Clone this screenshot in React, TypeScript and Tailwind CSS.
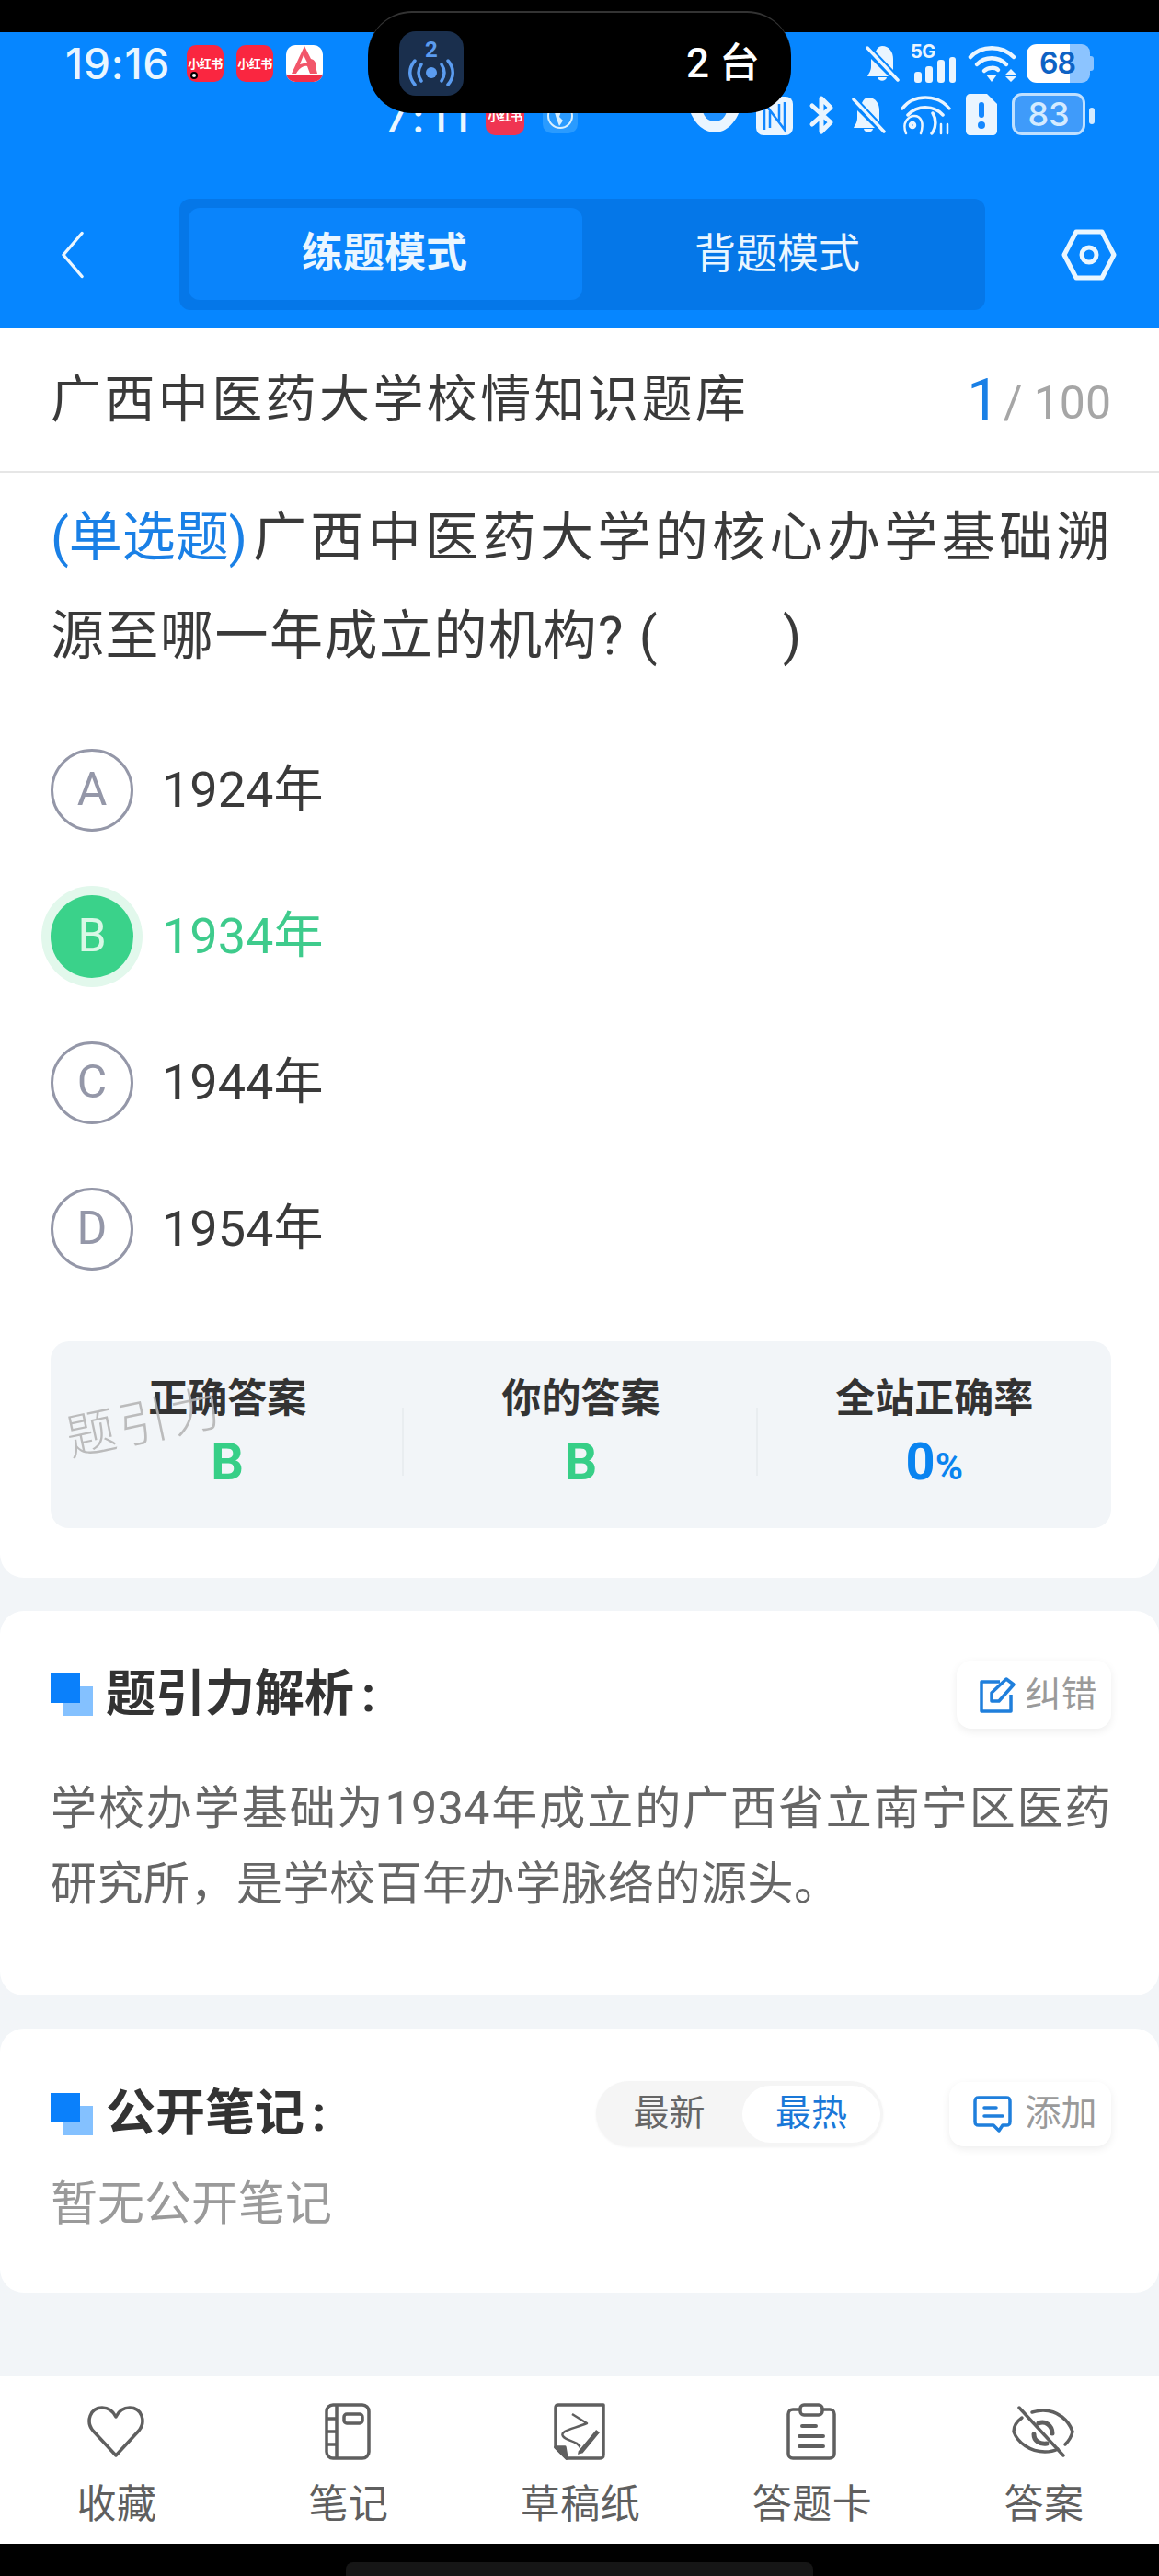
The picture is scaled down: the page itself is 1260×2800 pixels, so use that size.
import React from 'react';

const FONT = "font-['Roboto','Noto_Sans_CJK_SC',sans-serif]";

const RedApp: React.FC<{ dot?: boolean }> = ({ dot }) => (
  <div className="relative w-[40px] h-[40px] rounded-[10px] bg-[#fa2640] flex items-center justify-center">
    <span className="text-[13px] font-bold text-white leading-none tracking-[-0.5px] whitespace-nowrap">小红书</span>
    {dot && <span className="absolute left-[4px] bottom-[3px] w-[8px] h-[8px] rounded-full bg-white border-2 border-black" />}
  </div>
);

const AApp = () => (
  <div className="w-[40px] h-[40px] rounded-[10px] bg-white overflow-hidden flex flex-col">
    <svg viewBox="0 0 40 32" className="w-[40px] h-[32px]">
      <path d="M20 1 L27 15 C31 16 33 19 32 23 L34 31 L26 31 L23 23 C18 22 14 26 11 31 L6 31 Z" fill="#f2566a" />
      <path d="M19 11 L23 19 L15 21 Z" fill="#fff" />
    </svg>
    <div className="flex-1 bg-[#f0304a]" />
  </div>
);

const BellOff: React.FC<{ className?: string; color?: string }> = ({ className, color = '#eaf5ff' }) => (
  <svg viewBox="0 0 38 42" className={className}>
    <path d="M19 2 C27 2 31 9 31 16 L31 28 L12 8 C13.500 4 16 2 19 2 Z M7 16 L26 35 L3 35 C5 31 7 29 7 24 Z" fill={color} />
    <path d="M14 36 C15 41 23 41 24 36 Z" fill={color} />
    <path d="M3 4 L36 39" stroke={color} strokeWidth="3.500" strokeLinecap="round" />
  </svg>
);

const Wifi: React.FC = () => (
  <svg viewBox="0 0 54 42" className="w-[54px] h-[42px]" fill="none" stroke="#eaf5ff" strokeWidth="4.500" strokeLinecap="round">
    <path d="M3 14 C15 1 37 1 50 14" />
    <path d="M10 22 C19 13 33 13 42 22" />
    <path d="M18 29 C22 25 30 25 33 28" />
    <path d="M20 33 L32 33 L26 41 Z" fill="#eaf5ff" stroke="none" />
    <path d="M44 29 L50 35 L38 35 Z M38 37 L50 37 L44 43 Z" fill="#eaf5ff" stroke="none" transform="translate(3 -2)" />
  </svg>
);

const StatusTop = () => (
  <div className="h-[42px] flex items-center justify-between">
    <div className="flex items-center">
      <span className="w-[132px] text-[46px] leading-none text-[#eaf6ff] font-medium font-['Inter',sans-serif] tracking-[0.8px]">19:16</span>
      <div className="flex gap-[14px]">
        <RedApp dot />
        <RedApp />
        <AApp />
      </div>
    </div>
    <div className="flex items-center">
      <BellOff className="w-[38px] h-[42px]" />
      <div className="relative w-[50px] h-[42px] ml-[13px]">
        <span className="absolute left-[-1px] top-[-3px] text-[20px] font-bold leading-[22px] text-[#eaf5ff] font-['Inter',sans-serif] tracking-[-0.5px]">5G</span>
        <svg viewBox="0 0 50 42" className="w-[50px] h-[42px]" fill="#eaf5ff">
          <rect x="3" y="30" width="8" height="12" rx="3" />
          <rect x="15" y="24" width="8" height="18" rx="3" />
          <rect x="28" y="17" width="8" height="25" rx="3" />
          <rect x="41" y="14" width="7" height="28" rx="3" />
        </svg>
      </div>
      <div className="ml-[11px]"><Wifi /></div>
      <div className="ml-[10px] w-[74px] h-[42px] relative flex">
        <div className="w-[47px] h-[42px] bg-white rounded-l-[11px]" />
        <div className="w-[22px] h-[42px] bg-[#8cc4ff] rounded-r-[9px]" />
        <div className="w-[4px] h-[16px] mt-[13px] bg-[#8cc4ff] rounded-r-[3px]" />
        <span className="absolute left-[14px] top-[1px] text-[32px] font-semibold leading-[40px] text-[#0d62c4] font-['Inter',sans-serif] tracking-[-1px]">68</span>
      </div>
    </div>
  </div>
);

const StatusGhost = () => (
  <div className="h-[48px] flex items-end">
    <span className="ml-[347px] w-[110px] text-[46px] leading-[40px] text-[#eaf6ff] font-medium font-['Inter',sans-serif] tracking-[5px] whitespace-nowrap">7:11</span>
    <div className="ml-[0px] w-[42px] h-[42px] rounded-[10px] bg-[#f03552] flex items-center justify-center">
      <span className="text-[13px] font-bold text-white leading-none tracking-[-0.5px] whitespace-nowrap">小红书</span>
    </div>
    <svg viewBox="0 0 38 38" className="ml-[20px] w-[38px] h-[38px] mb-[2px]" fill="none" stroke="#d9f0ff" strokeWidth="2">
      <rect x="0" y="0" width="38" height="38" rx="10" fill="#2a9bff" stroke="none" />
      <circle cx="19" cy="19" r="13" />
      <path d="M12 12 L20 14 L18 20 L22 24 L18 30 L15 22 Z" fill="#d9f0ff" stroke="none" />
    </svg>
    <svg viewBox="0 0 60 40" className="ml-[119px] w-[60px] h-[40px] mb-[2px]">
      <path d="M0 6 C10 50 50 50 60 6 Z" fill="#eaf5ff" />
      <circle cx="30" cy="14" r="13" fill="#1e90ff" />
    </svg>
    <svg viewBox="0 0 40 42" className="ml-[15px] w-[40px] h-[42px]" fill="none" stroke="#1287ff" strokeWidth="2.500">
      <rect x="0" y="0" width="40" height="42" rx="8" fill="#eaf5ff" stroke="none" />
      <path d="M9 36 L9 7 L31 36 L31 6 M15 34 L15 16 M25 8 L25 26" />
    </svg>
    <svg viewBox="0 0 28 44" className="ml-[17px] w-[28px] h-[44px]" fill="none" stroke="#eaf5ff" strokeWidth="5" strokeLinejoin="round" strokeLinecap="round">
      <path d="M4 12 L24 30 L14 40 L14 4 L24 14 L4 32" />
    </svg>
    <BellOff className="ml-[18px] w-[38px] h-[44px]" />
    <svg viewBox="0 0 56 46" className="ml-[15px] w-[56px] h-[46px]" fill="none" stroke="#eaf5ff" strokeWidth="3.500" strokeLinecap="round">
      <path d="M3 17 C15 1 41 1 54 17" />
      <path d="M9 24 C19 13 37 13 47 24" />
      <circle cx="14" cy="35" r="2.500" />
      <path d="M7 44 C2 32 10 25 16 25 C23 25 27 32 23 44" strokeWidth="2.500" />
      <path d="M36 22 C40 28 40 38 35 44" />
      <path d="M45 34 L45 44 M52 34 L52 44" strokeWidth="2.500" />
    </svg>
    <svg viewBox="0 0 34 46" className="ml-[16px] w-[34px] h-[46px]">
      <path d="M5 1 L23 1 L34 12 L34 41 C34 44 32 46 29 46 L5 46 C2 46 0 44 0 41 L0 6 C0 3 2 1 5 1 Z" fill="#eaf5ff" />
      <rect x="14" y="10" width="6" height="17" rx="3" fill="#1287ff" />
      <circle cx="17" cy="35" r="4" fill="#1287ff" />
    </svg>
    <div className="ml-[16px] w-[80px] h-[46px] rounded-[11px] border-[3px] border-[#bfe0ff] bg-[#3f9bfa] flex items-center justify-center">
      <span className="text-[36px] leading-none font-medium text-[#d4ebff] font-['Inter',sans-serif]">83</span>
    </div>
    <div className="ml-[4px] mb-[12px] w-[6px] h-[18px] rounded-[3px] bg-[#d4ebff]" />
  </div>
);

const SectionTitle: React.FC<{ children: React.ReactNode }> = ({ children }) => (
  <div className="flex items-center gap-[14px]">
    <div className="relative w-[46px] h-[46px] shrink-0">
      <div className="absolute right-0 bottom-0 w-[32px] h-[32px] bg-[#84c1ff]" />
      <div className="absolute left-0 top-0 w-[32px] h-[32px] bg-[#0a80fb]" />
    </div>
    <span className="text-[54px] leading-none font-bold text-[#333333]">
      {children}
      <span className="ml-[8px]">:</span>
    </span>
  </div>
);

const options = [
  { key: 'A', text: '1924年' },
  { key: 'B', text: '1934年', correct: true },
  { key: 'C', text: '1944年' },
  { key: 'D', text: '1954年' },
];

const Option: React.FC<{ label: string; text: string; correct?: boolean }> = ({ label, text, correct }) => (
  <div className="h-[159px] flex items-center">
    {correct ? (
      <div className="w-[90px] h-[90px] rounded-full bg-[#3ad28a] ring-[10px] ring-[#e2f8ec] flex items-center justify-center text-[50px] text-[#d8f8e6]">{label}</div>
    ) : (
      <div className="w-[90px] h-[90px] rounded-full border-[3px] border-[#9497a8] flex items-center justify-center text-[50px] text-[#9497a8]">{label}</div>
    )}
    <span className={`ml-[31px] text-[54px] leading-none ${correct ? 'text-[#3ecb8c]' : 'text-[#3a3a3a]'}`}>{text}</span>
  </div>
);

const Stat: React.FC<{ label: string; children: React.ReactNode; divider?: boolean }> = ({ label, children, divider }) => (
  <div className="relative flex-1 flex flex-col items-center pt-[36px]">
    <span className="text-[43px] leading-[52px] font-bold text-[#333333]">{label}</span>
    <div className="mt-[11px] h-[64px] flex items-center">{children}</div>
    {divider && <div className="absolute right-0 top-[72px] h-[74px] w-[2px] bg-[#e9edf0]" />}
  </div>
);

const HeartIcon = () => (
  <svg viewBox="0 0 64 56" className="w-[64px] h-[56px]" fill="none" stroke="#5f5f5f" strokeWidth="3.500" strokeLinejoin="round">
    <path d="M32 54 L7 27 C-1 17 4 2 17 2 C24 2 29 6 32 12 C35 6 40 2 47 2 C60 2 65 17 57 27 Z" />
  </svg>
);

const NoteIcon = () => (
  <svg viewBox="0 0 50 62" className="w-[50px] h-[62px]" fill="none" stroke="#5f5f5f" strokeWidth="3.500">
    <rect x="2" y="2" width="46" height="58" rx="7" />
    <path d="M13 2 L13 60 M2 17 L13 17 M2 31 L13 31 M2 45 L13 45" />
    <rect x="21" y="12" width="20" height="10" rx="3" />
  </svg>
);

const DraftIcon = () => (
  <svg viewBox="0 0 56 62" className="w-[56px] h-[62px]" fill="none" stroke="#5f5f5f" strokeWidth="3.500" strokeLinejoin="round">
    <path d="M14 60 L50 60 C53 60 54 59 54 56 L54 2 L5 2 C3 2 2 3 2 5 L2 48 Z" />
    <path d="M2 48 L12 48 L14 60 Z" fill="#5f5f5f" />
    <path d="M20 12 L36 22 C22 28 6 30 10 36 C14 42 26 40 30 50" strokeWidth="2.500" />
    <path d="M26 52 L46 28 L51 32 L32 55 L25 57 Z" fill="#5f5f5f" stroke="#fff" strokeWidth="1.500" />
  </svg>
);

const ClipboardIcon = () => (
  <svg viewBox="0 0 54 62" className="w-[54px] h-[62px]" fill="none" stroke="#5f5f5f" strokeWidth="3.500" strokeLinecap="round">
    <path d="M14 7 L7 7 C4 7 2 9 2 12 L2 55 C2 58 4 60 7 60 L47 60 C50 60 52 58 52 55 L52 12 C52 9 50 7 47 7 L40 7" />
    <rect x="15" y="2" width="24" height="11" rx="4" />
    <path d="M17 25 L32 25 M14 36 L40 36 M14 47 L40 47" strokeWidth="4" />
  </svg>
);

const EyeOffIcon = () => (
  <svg viewBox="0 0 68 56" className="w-[68px] h-[56px]" fill="none" stroke="#5f5f5f" strokeWidth="3.500" strokeLinecap="round">
    <path d="M11 13 C4 18 2 24 2 28 C6 40 20 50 36 50 C41 50 46 49 50 47" />
    <path d="M22 7 C26 6 30 5 34 5 C50 5 62 16 66 28 C65 33 62 38 58 42" />
    <path d="M24 31 C24 38 30 42 38 41 M29 19 C36 16 44 21 44 30" strokeWidth="5" />
    <path d="M8 2 L56 54" />
  </svg>
);

const tabs: { label: string; icon: React.ReactNode }[] = [
  { label: '收藏', icon: <HeartIcon /> },
  { label: '笔记', icon: <NoteIcon /> },
  { label: '草稿纸', icon: <DraftIcon /> },
  { label: '答题卡', icon: <ClipboardIcon /> },
  { label: '答案', icon: <EyeOffIcon /> },
];

export default function App() {
  return (
    <div className={`relative w-[1260px] h-[2800px] bg-[#f2f5f8] flex flex-col overflow-hidden ${FONT}`}>
      <div className="h-[35px] shrink-0 bg-black" />

      {/* blue header with the two status bars */}
      <div className="h-[322px] shrink-0 bg-[#0686ff] flex flex-col">
        <div className="pl-[71px] pr-[70px] pt-[13px]">
          <StatusTop />
          <div className="mt-[9px]"><StatusGhost /></div>
        </div>
        <div className="mt-[69px] flex items-center">
          <div className="w-[195px] flex justify-center pr-[38px]">
            <svg viewBox="0 0 30 62" className="w-[30px] h-[52px]" fill="none" stroke="#eaf6ff" strokeWidth="4" strokeLinecap="round" strokeLinejoin="round">
              <path d="M27 3 L3 31 L27 59" />
            </svg>
          </div>
          <div className="w-[876px] h-[121px] rounded-[12px] bg-[#0577e8] p-[10px] flex">
            <div className="w-[428px] h-[100px] rounded-[12px] bg-[#0a84fb] flex items-center justify-center pr-[2px] text-[45px] font-bold text-[#eaf6ff]">练题模式</div>
            <div className="flex-1 flex items-center justify-center pr-[4px] text-[45px] text-[#eaf6ff]">背题模式</div>
          </div>
          <div className="flex-1 flex justify-center pl-[36px]">
            <svg viewBox="0 0 60 56" className="w-[60px] h-[56px]" fill="none" stroke="#eaf6ff" strokeWidth="5" strokeLinejoin="round">
              <path d="M16 3 L44 3 L57 28 L44 53 L16 53 L3 28 Z" />
              <circle cx="30" cy="28" r="8" />
            </svg>
          </div>
        </div>
      </div>

      {/* question card */}
      <div className="h-[1358px] shrink-0 bg-white rounded-b-[26px] flex flex-col">
        <div className="h-[157px] shrink-0 border-b-2 border-[#e6e6e6] pl-[55px] pr-[52px] flex items-center justify-between">
          <span className="text-[55px] leading-none tracking-[3.400px] text-[#3a3a3a] whitespace-nowrap">广西中医药大学校情知识题库</span>
          <div className="flex items-end">
            <span className="text-[63px] leading-none text-[#1a80e6]">1</span>
            <span className="ml-[4px] mb-[3px] text-[50px] leading-none text-[#a6a6a6]">/ 100</span>
          </div>
        </div>
        <div className="pl-[55px] pr-[52px] pt-[17px]">
          <div className="text-[58px] leading-[107px] tracking-[1.500px] text-[#3a3a3a] text-justify">
            <span className="inline-block w-[217px] tracking-normal whitespace-nowrap text-[#1a80e6]">(单选题)</span>
            广西中医药大学的核心办学基础溯源至哪一年成立的机构?&nbsp;(　　&nbsp;)
          </div>
          <div className="mt-[34px]">
            {options.map((o) => (
              <Option key={o.key} label={o.key} text={o.text} correct={o.correct} />
            ))}
          </div>
          <div className="relative mt-[43px] h-[203px] rounded-[20px] bg-[#f2f5f8] flex">
            <Stat label="正确答案" divider><span className="text-[56px] leading-none font-bold text-[#37cf87]">B</span></Stat>
            <Stat label="你的答案" divider><span className="text-[56px] leading-none font-bold text-[#37cf87]">B</span></Stat>
            <Stat label="全站正确率">
              <span className="text-[56px] leading-none font-bold text-[#0a84f0]">0<span className="text-[41px]">%</span></span>
            </Stat>
            <span className="absolute left-[16px] top-[62px] -rotate-[12deg] text-[54px] leading-none font-light text-[#b5b5b5]/90 tracking-[4px] whitespace-nowrap">题引力</span>
          </div>
        </div>
      </div>

      {/* analysis card */}
      <div className="mt-[36px] h-[418px] shrink-0 bg-white rounded-[26px] pl-[55px] pr-[52px] pt-[54px]">
        <div className="flex items-center justify-between">
          <SectionTitle>题引力解析</SectionTitle>
          <div className="w-[168px] h-[74px] rounded-[16px] bg-white shadow-[0_3px_10px_rgba(0,0,0,0.07)] flex items-center justify-center gap-[9px] pl-[10px]">
            <svg viewBox="0 0 40 40" className="w-[40px] h-[40px]" fill="none" stroke="#1f7fdc" strokeWidth="3.500" strokeLinejoin="round">
              <path d="M22 6 L2 6 L2 38 L34 38 L34 20" />
              <path d="M13 18 L29 3 L37 9 L21 27 L13 27 Z" />
            </svg>
            <span className="text-[39px] leading-none text-[#9a9a9a]">纠错</span>
          </div>
        </div>
        <p className="mt-[46px] text-[50px] leading-[82px] tracking-[0.500px] text-[#666666] text-justify">
          学校办学基础为1934年成立的广西省立南宁区医药研究所，是学校百年办学脉络的源头。
        </p>
      </div>

      {/* notes card */}
      <div className="mt-[36px] h-[287px] shrink-0 bg-white rounded-[26px] pl-[55px] pr-[52px] pt-[57px]">
        <div className="flex items-center">
          <SectionTitle>公开笔记</SectionTitle>
          <div className="ml-auto w-[312px] h-[71px] rounded-full bg-[#f5f5f5] shadow-[0_1px_3px_rgba(0,0,0,0.05)] flex items-center pr-[3px]">
            <span className="w-[159px] text-center text-[39px] leading-none text-[#666666]">最新</span>
            <span className="flex-1 h-[62px] rounded-full bg-white flex items-center justify-center text-[39px] leading-none text-[#1a78d8]">最热</span>
          </div>
          <div className="ml-[72px] w-[176px] h-[70px] rounded-[16px] bg-white shadow-[0_3px_10px_rgba(0,0,0,0.07)] flex items-center justify-center gap-[14px] pl-[11px]">
            <svg viewBox="0 0 42 42" className="w-[42px] h-[42px]" fill="none" stroke="#1f7fdc" strokeWidth="3.500" strokeLinejoin="round" strokeLinecap="round">
              <path d="M6 3 L36 3 C39 3 40 4 40 7 L40 29 C40 32 39 33 36 33 L32 33 L28 39 L22 33 L6 33 C3 33 2 32 2 29 L2 7 C2 4 3 3 6 3 Z" />
              <path d="M12 14 L25 14 M12 23 L32 23" />
            </svg>
            <span className="text-[39px] leading-none text-[#9a9a9a]">添加</span>
          </div>
        </div>
        <p className="mt-[33px] text-[51px] leading-[60px] text-[#9a9a9a]">暂无公开笔记</p>
      </div>

      <div className="flex-1" />

      {/* bottom toolbar */}
      <div className="h-[182px] shrink-0 bg-white grid grid-cols-5 pt-[28px]">
        {tabs.map((t) => (
          <div key={t.label} className="flex flex-col items-center">
            <div className="h-[64px] flex items-center justify-center">{t.icon}</div>
            <span className="mt-[24px] pl-[2px] text-[43px] leading-[46px] tracking-[0.5px] text-[#5f5f5f]">{t.label}</span>
          </div>
        ))}
      </div>
      <div className="h-[35px] shrink-0 bg-black flex justify-center pt-[20px]">
        <div className="w-[508px] h-[15px] rounded-t-[8px] bg-[#161616]" />
      </div>

      {/* dynamic-island pill above the status bars */}
      <div className="absolute left-[400px] top-[12px] w-[460px] h-[111px] rounded-[48px] bg-black border-t-2 border-[#333333] flex items-center justify-between pl-[34px] pr-[34px]">
        <div className="w-[70px] h-[70px] rounded-[18px] bg-[#1a2f4d] flex flex-col items-center justify-center">
          <span className="text-[24px] font-bold leading-[20px] text-[#5b9cf0]">2</span>
          <svg viewBox="0 0 50 30" className="w-[50px] h-[30px]" fill="none" stroke="#5b9cf0" strokeWidth="3.500" strokeLinecap="round">
            <circle cx="25" cy="15" r="6" fill="#5b9cf0" stroke="none" />
            <path d="M14 6 C10 12 10 18 14 24 M36 6 C40 12 40 18 36 24 M7 2 C0 10 0 20 7 28 M43 2 C50 10 50 20 43 28" />
          </svg>
        </div>
        <span className="text-[44px] leading-none font-medium text-white whitespace-nowrap">2 台</span>
      </div>
    </div>
  );
}
